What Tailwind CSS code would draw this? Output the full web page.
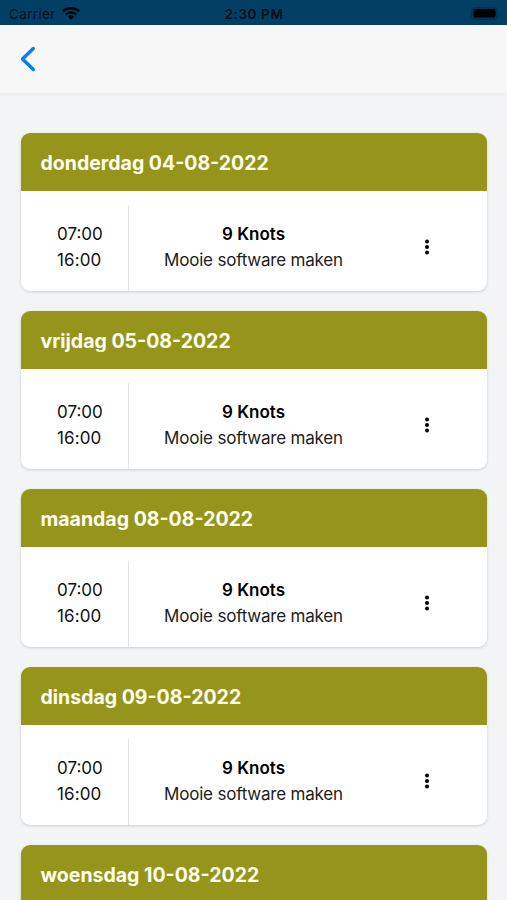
<!DOCTYPE html>
<html lang="nl">
<head>
<meta charset="utf-8">
<meta name="viewport" content="width=device-width, initial-scale=1">
<title>Planning</title>
<script src="https://cdn.jsdelivr.net/npm/@tailwindcss/browser@4"></script>
</head>
<body class="h-[900px] overflow-hidden bg-[#f2f4f6] font-['Inter','Liberation_Sans',sans-serif] text-black">
<div class="grid h-[25px] grid-cols-3 items-center bg-[#033f65] pr-[6px] pl-[9px] pt-[3px] text-[13px] leading-4">
  <div class="flex items-center gap-[6px] text-black/75"><span class="text-[13.500px] tracking-[0.35px]">Carrier</span>
    <svg class="-mt-[2px] h-[13px] w-[18px] text-black" viewBox="0 0 18 13" fill="currentColor"><path d="M9 0C5.500 0 2.300 1.300 0 3.500l1.700 1.800C3.700 3.500 6.200 2.500 9 2.500s5.300 1 7.300 2.800L18 3.500C15.700 1.300 12.500 0 9 0Z"/><path d="M9 4.200c-2.300 0-4.400.900-6 2.400l1.700 1.800C5.900 7.300 7.400 6.600 9 6.600s3.100.700 4.300 1.800L15 6.600c-1.600-1.500-3.700-2.400-6-2.400Z"/><path d="M9 8.200c-1.200 0-2.300.500-3.100 1.300L9 12.900l3.100-3.400C11.300 8.700 10.200 8.200 9 8.200Z"/></svg>
  </div>
  <div class="-ml-[2px] text-center text-[13.500px] font-semibold tracking-[0.6px] text-black/80">2:30 PM</div>
  <div class="flex justify-end"><svg class="h-[14px] w-[30px]" viewBox="0 0 30 14"><rect x=".5" y=".5" width="26" height="12" rx="3.500" fill="#033656" stroke="#022f4c"/><rect x="2.500" y="2" width="22" height="8.500" rx="1.500" fill="#000"/><path d="M28 4.500q1.500 2 0 4z" fill="#022f4c"/></svg></div>
</div>
<header class="flex h-[69px] items-center border-b border-[#e9eaeb] bg-[#f7f7f7] pl-5 shadow-[0_1px_2px_rgba(0,0,0,0.03)]">
  <button aria-label="Terug"><svg class="h-[26px] w-4" viewBox="0 0 16 26" fill="none" stroke="#087bf5" stroke-width="3.400" stroke-linecap="round" stroke-linejoin="round"><path d="M13.300 2.500 2.500 13l10.800 10.500"/></svg></button>
</header>
<main id="days" class="flex flex-col gap-[19.5px] px-[20.5px] pt-[39px]"></main>
<template id="card">
  <article class="shrink-0 overflow-hidden rounded-[9px] bg-white shadow-[0_1px_3px_rgba(0,0,0,0.16)]">
    <h2 class="flex h-[58.4px] items-center bg-[#95951c] px-[20px] pt-[2px] text-[19.5px] font-bold text-[#fffdf0]"></h2>
    <div class="grid h-[100.1px] grid-cols-[108px_250px_1fr] pt-[13.600px] text-[17px] leading-[26px]">
      <div class="border-r border-[#e4e5e7] pt-[16px] pl-[36.5px] text-[#111]"><div>07:00</div><div class="tracking-[0.1px]">16:00</div></div>
      <div class="pt-[16px] text-center"><div class="font-semibold">9 Knots</div><div class="tracking-[-0.2px] text-[#1c1c1c]">Mooie software maken</div></div>
      <div class="pt-[34px] pl-[45px]"><svg class="h-4 w-1.5" viewBox="0 0 6 16"><circle cx="3" cy="2.600" r="2"/><circle cx="3" cy="8" r="2"/><circle cx="3" cy="13.400" r="2"/></svg></div>
    </div>
  </article>
</template>
<script>
const days = ["donderdag 04-08-2022", "vrijdag 05-08-2022", "maandag 08-08-2022", "dinsdag 09-08-2022", "woensdag 10-08-2022"];
days.forEach((day, i) => {
  const card = document.getElementById("card").content.cloneNode(true);
  card.querySelector("h2").textContent = day;
  // The last card's details lie below the fold.
  if (i === days.length - 1) {
    card.querySelector("h2").nextElementSibling.remove();
    card.querySelector("article").classList.add("rounded-b-none");
  }
  document.getElementById("days").append(card);
});
</script>
</body>
</html>
